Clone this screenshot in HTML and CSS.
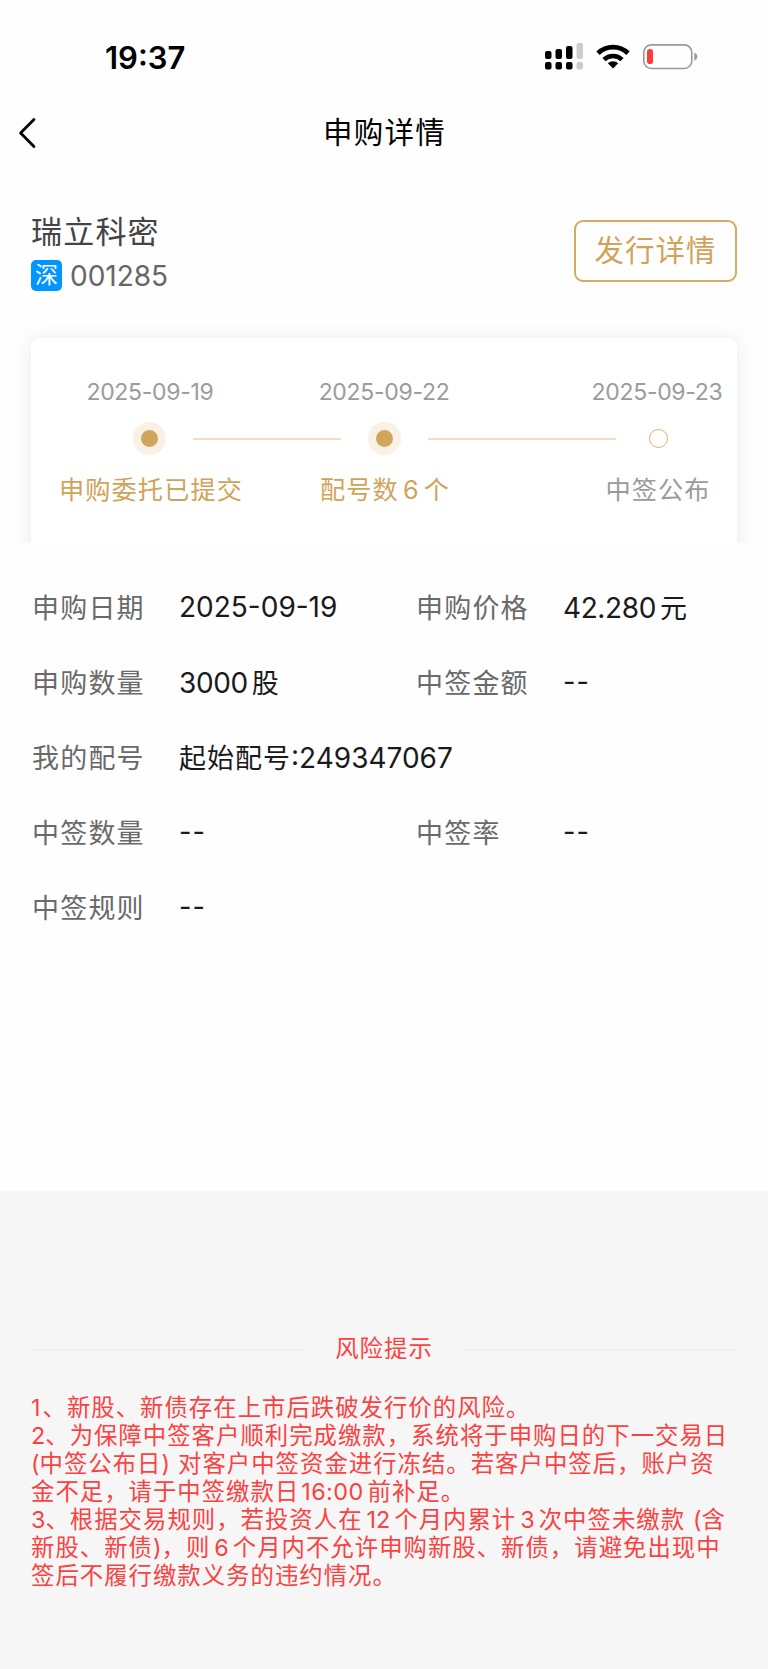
FILE: index.html
```html
<!DOCTYPE html>
<html lang="zh-CN">
<head>
    <meta charset="UTF-8">
    <title>申购详情</title>
    <link rel="stylesheet" href="styles.css">
</head>
<body>
    <div class="status-bar">
        <div class="time">19:37</div>
        <div class="status-icons">
            <svg class="signal" width="38" height="27" viewBox="0 0 38 27">
                <rect x="0" y="8" width="6.5" height="8" rx="2"/>
                <rect x="10.5" y="6" width="6.5" height="10" rx="2"/>
                <rect x="21" y="3" width="6.5" height="13" rx="2"/>
                <rect x="31.5" y="0" width="6.5" height="16" rx="2" fill="#ccc"/>
                <rect x="0" y="19" width="6.5" height="7.5" rx="2"/>
                <rect x="10.5" y="19" width="6.5" height="7.5" rx="2"/>
                <rect x="21" y="19" width="6.5" height="7.5" rx="2"/>
                <rect x="31.5" y="19" width="6.5" height="7.5" rx="2" fill="#ccc"/>
            </svg>
            <svg class="wifi" width="34" height="25" viewBox="0 0 34 25">
                <path d="M2 9.2 A21.5 21.5 0 0 1 32 9.2" fill="none" stroke="#000" stroke-width="4.8"/>
                <path d="M8 15.6 A13 13 0 0 1 26 15.6" fill="none" stroke="#000" stroke-width="4.6"/>
                <path d="M11.8 19.2 A7.6 7.6 0 0 1 22.2 19.2 L17 24.6 Z"/>
            </svg>
            <svg class="battery" width="55" height="26" viewBox="0 0 55 26">
                <rect x="0.8" y="0.9" width="48" height="23.6" rx="7.5" fill="none" stroke="#999" stroke-width="1.6"/>
                <rect x="4" y="5" width="6" height="15" rx="2.8" fill="#ff3b3b"/>
                <path d="M51.3 8.6 Q54.4 10 54.4 12.7 T51.3 16.8 Z" fill="#999"/>
            </svg>
        </div>
    </div>
    <div class="nav">
        <svg class="back" width="20" height="34" viewBox="0 0 20 34">
            <path d="M16 3.4 L2.6 17 L16 30.6" fill="none" stroke="#000" stroke-width="2.8" stroke-linecap="round" stroke-linejoin="round"/>
        </svg>
        <div class="nav-title">申购详情</div>
    </div>
    <div class="stock">
        <div>
            <div class="stock-name">瑞立科密</div>
            <div class="stock-code"><span class="market">深</span>001285</div>
        </div>
        <div class="issue-button">发行详情</div>
    </div>
    <div class="progress">
        <div class="progress-card">
            <div class="step-row dates">
                <div>2025-09-19</div>
                <div>2025-09-22</div>
                <div>2025-09-23</div>
            </div>
            <div class="track">
                <div class="dot"></div>
                <div class="line"></div>
                <div class="dot"></div>
                <div class="line"></div>
                <div class="circle"></div>
            </div>
            <div class="step-row names">
                <div>申购委托已提交</div>
                <div>配号数<span class="count">6</span>个</div>
                <div class="todo">中签公布</div>
            </div>
        </div>
    </div>
    <div class="detail">
        <label>申购日期</label><div class="value"><span class="num long">2025-09-19</span></div>
        <label>申购价格</label><div class="value"><span class="num">42.280</span><span class="unit">元</span></div>
        <label>申购数量</label><div class="value"><span class="num">3000</span><span class="unit">股</span></div>
        <label>中签金额</label><div class="value">--</div>
        <label>我的配号</label><div class="value wide">起始配号<span class="num long">:249347067</span></div>
        <label>中签数量</label><div class="value">--</div>
        <label>中签率</label><div class="value">--</div>
        <label>中签规则</label><div class="value">--</div>
    </div>
    <div class="risk">
        <div class="risk-title">风险提示</div>
        <div class="risk-text">
            <div><span class="n first">1</span>、新股、新债存在上市后跌破发行价的风险。</div>
            <div><span class="n">2</span>、为保障中签客户顺利完成缴款，系统将于申购日的下一交易日</div>
            <div><span class="n">(</span>中签公布日<span class="n close">)</span>对客户中签资金进行冻结。若客户中签后，账户资</div>
            <div>金不足，请于中签缴款日<span class="n clock">16:00</span><span class="gap">前</span>补足。</div>
            <div><span class="n">3</span>、根据交易规则，若投资人在<span class="n gap">12</span><span class="gap">个</span>月内累计<span class="n gap">3</span><span class="gap">次</span>中签未缴款<span class="n open">(</span>含</div>
            <div>新股、新债<span class="n">)</span>，则<span class="n gap">6</span><span class="gap">个</span>月内不允许申购新股、新债，请避免出现中</div>
            <div>签后不履行缴款义务的违约情况。</div>
        </div>
    </div>
</body>
</html>
```

FILE: styles.css
```css
* {
    box-sizing: border-box;
}
body {
    margin: 0;
    width: 768px;
    height: 1669px;
    display: flex;
    flex-direction: column;
    background-color: #fefefe;
    color: #1a1a1a;
    font-family: Inter, "Noto Sans CJK SC", sans-serif;
    white-space: nowrap;
    overflow: hidden;
}
.status-bar {
    display: flex;
    justify-content: space-between;
    height: 98px;
    padding: 38px 70px 0 105px;
    color: #000;
}
.time {
    padding-top: 1px;
    font-size: 31px;
    line-height: 38px;
    font-weight: 600;
    letter-spacing: 0;
}
.status-icons {
    display: flex;
    align-items: flex-start;
    padding-top: 5px;
}
.wifi {
    margin: 1px 0 0 13px;
}
.battery {
    margin: 1px 0 0 13px;
}
.nav {
    display: flex;
    align-items: center;
    height: 70px;
    padding-left: 18px;
}
.nav-title {
    width: 732px;
    padding: 0 37px 6px 0;
    text-align: center;
    font-size: 29.5px;
    letter-spacing: 1.2px;
    color: #000;
}
.stock {
    display: flex;
    justify-content: space-between;
    align-items: flex-start;
    height: 154px;
    padding: 44px 31px 0;
}
.stock-name {
    font-size: 31px;
    line-height: 40px;
    letter-spacing: 1.2px;
    color: #444;
}
.stock-code {
    display: flex;
    align-items: center;
    height: 31px;
    margin-top: 8px;
    font-size: 28px;
    letter-spacing: 0;
    color: #666;
}
.market {
    width: 31px;
    height: 31px;
    margin-right: 8px;
    border-radius: 5px;
    background-color: #0095ff;
    color: #fff;
    font-size: 23px;
    line-height: 30px;
    text-align: center;
}
.issue-button {
    width: 163px;
    height: 62px;
    margin-top: 8px;
    border: 2px solid #d6aa62;
    border-radius: 9px;
    color: #d1a359;
    font-size: 29.5px;
    line-height: 56px;
    letter-spacing: 1px;
    text-align: center;
}
/* the lower part of the card shadow is cut off */
.progress {
    height: 221px;
    padding: 16px 31px 0;
    overflow: hidden;
}
.progress-card {
    height: 240px;
    border-radius: 8px;
    background-color: #fff;
    box-shadow: 0 0 20px rgba(0, 0, 0, 0.08);
    padding-top: 39px;
}
.step-row {
    display: flex;
    padding-left: 28px;
    text-align: center;
}
.step-row > div {
    display: flex;
    justify-content: center;
    width: 182px;
}
.step-row > div:nth-child(2) {
    width: 130px;
    margin: 0 143px 0 78px;
}
.step-row > div:nth-child(3) {
    width: 130px;
}
.dates {
    font-size: 23px;
    line-height: 30px;
    letter-spacing: -0.3px;
    color: #9b9b9b;
}
.track {
    display: flex;
    align-items: center;
    height: 33px;
    margin-top: 15px;
    padding-left: 102px;
}
.dot {
    width: 33px;
    height: 33px;
    border: 8px solid #f9f1e5;
    border-radius: 50%;
    background-color: #d1a55b;
}
.line {
    width: 148px;
    height: 2px;
    margin: 0 27px;
    background-color: #f0dfc5;
}
.line:nth-child(4) {
    width: 188px;
    margin-right: 33px;
}
.circle {
    width: 19px;
    height: 19px;
    border: 1px solid #dcb273;
    border-radius: 50%;
}
.names {
    margin: 17px 0 0 1px;
    font-size: 25.2px;
    line-height: 36px;
    letter-spacing: 1.1px;
    color: #d1a359;
}
.names .todo {
    color: #9b9b9b;
}
.count {
    margin: 0 4px;
}
.detail {
    display: grid;
    grid-template-columns: 148px 236px 148px 1fr;
    grid-auto-rows: 75px;
    align-items: center;
    height: 648px;
    padding: 26px 0 0 31px;
    align-content: start;
    font-size: 27px;
}
.detail label {
    padding-left: 1px;
    color: #6a6a6a;
    letter-spacing: 1.2px;
}
.value {
    letter-spacing: 1px;
}
.value .num {
    font-size: 28px;
    letter-spacing: -0.4px;
}
.value .long {
    letter-spacing: 0;
}
.unit {
    margin-left: 4px;
}
.wide {
    grid-column: span 3;
}
.risk {
    flex: 1;
    padding: 142px 31px 0;
    background-color: #f6f6f6;
    color: #fb4242;
}
.risk-title {
    display: flex;
    align-items: center;
    justify-content: space-between;
    height: 32px;
    font-size: 23.4px;
    line-height: 28px;
    letter-spacing: 1px;
}
.risk-title::before,
.risk-title::after {
    content: "";
    width: 274px;
    height: 1px;
    background-color: #ebebeb;
}
.risk-text {
    margin-top: 29px;
    font-size: 23.4px;
    line-height: 28px;
    letter-spacing: 1px;
}
.risk-text > div {
    height: 28px;
}
.risk-text .n {
    letter-spacing: 0;
}
.risk-text .first {
    margin-right: 2px;
}
.risk-text .clock {
    margin-left: 2px;
    letter-spacing: 0.4px;
}
.gap {
    margin-left: 4px;
}
.close {
    margin-right: 8px;
}
.open {
    margin-left: 8px;
}
```
